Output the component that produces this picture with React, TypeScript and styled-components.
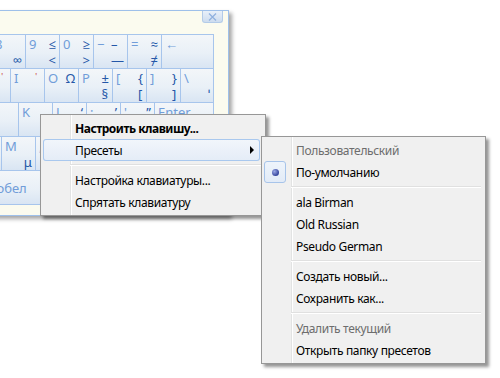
import React from "react";
import styled, { createGlobalStyle } from "styled-components";

type KeyDef = {
  id: string;
  w?: number;
  main?: string;
  top?: string;
  bottom?: string;
  mark?: boolean;
  wide?: boolean;
};

const ROWS: KeyDef[][] = [
  [
    { id: "7", main: "7", top: "&", bottom: "?" },
    { id: "8", main: "8", bottom: "∞" },
    { id: "9", main: "9", top: "≤", bottom: "<" },
    { id: "0", main: "0", top: "≥", bottom: ">" },
    { id: "minus", main: "−", top: "–", bottom: "—" },
    { id: "eq", main: "=", top: "≈", bottom: "≠" },
    { id: "bs", w: 51, main: "←" },
  ],
  [
    { id: "y", main: "Y" },
    { id: "u", main: "U", mark: true },
    { id: "i", main: "I", mark: true },
    { id: "o", main: "O", top: "Ω" },
    { id: "p", main: "P", top: "±", bottom: "§" },
    { id: "lb", main: "[", top: "{", bottom: "[" },
    { id: "rb", main: "]", top: "}", bottom: "]" },
    { id: "bsl", w: 32, main: "\\", bottom: "ˈ" },
  ],
  [
    { id: "h", main: "H" },
    { id: "j", main: "J" },
    { id: "k", main: "K" },
    { id: "l", main: "L", top: "‘" },
    { id: "semi", main: ";", top: "’" },
    { id: "quote", main: "'", top: "”" },
    { id: "enter", w: 58, main: "Enter" },
  ],
  [
    { id: "b", main: "B" },
    { id: "n", main: "N" },
    { id: "m", main: "M", bottom: "μ" },
    { id: "comma", main: "," },
    { id: "dot", main: "." },
    { id: "slash", main: "/" },
    { id: "rshift", w: 75, main: "Shift" },
  ],
  [
    { id: "alt", w: 40, main: "Alt" },
    { id: "space", w: 203, main: "Пробел", wide: true },
    { id: "ralt", w: 34, main: "Alt" },
  ],
];

type MenuEntry =
  | { kind: "sep"; id: string }
  | {
      kind: "item";
      id: string;
      label: string;
      bold?: boolean;
      disabled?: boolean;
      hot?: boolean;
      radio?: boolean;
      sub?: boolean;
    };

const MAIN_MENU: MenuEntry[] = [
  { kind: "item", id: "setup-key", label: "Настроить клавишу...", bold: true },
  { kind: "item", id: "presets", label: "Пресеты", hot: true, sub: true },
  { kind: "sep", id: "s1" },
  { kind: "item", id: "kb-setup", label: "Настройка клавиатуры..." },
  { kind: "item", id: "hide", label: "Спрятать клавиатуру" },
];

const PRESETS_MENU: MenuEntry[] = [
  { kind: "item", id: "custom", label: "Пользовательский", disabled: true },
  { kind: "item", id: "default", label: "По-умолчанию", radio: true },
  { kind: "sep", id: "s1" },
  { kind: "item", id: "birman", label: "ala Birman" },
  { kind: "item", id: "old-ru", label: "Old Russian" },
  { kind: "item", id: "pseudo-de", label: "Pseudo German" },
  { kind: "sep", id: "s2" },
  { kind: "item", id: "new", label: "Создать новый..." },
  { kind: "item", id: "save-as", label: "Сохранить как..." },
  { kind: "sep", id: "s3" },
  { kind: "item", id: "delete", label: "Удалить текущий", disabled: true },
  { kind: "item", id: "open-dir", label: "Открыть папку пресетов" },
];

const renderMenu = (entries: MenuEntry[]) =>
  entries.map((e) =>
    e.kind === "sep" ? (
      <Separator key={e.id} />
    ) : (
      <Item key={e.id} $bold={e.bold} $disabled={e.disabled} $hot={e.hot}>
        <IconCell $checked={e.radio}>{e.radio && <RadioDot />}</IconCell>
        {e.label}
        {e.sub && <SubArrow />}
      </Item>
    )
  );

const App: React.FC = () => {
  return (
    <Desktop>
      <GlobalStyle />
      <Window>
        <TitleBar>
          <CloseButton>
            <svg width="9" height="8" viewBox="0 0 9 8">
              <path d="M1 0.5 L8 7.5 M8 0.5 L1 7.5" stroke="#8fb0de" strokeWidth="1.2" />
            </svg>
          </CloseButton>
        </TitleBar>
        <Keyboard>
          {ROWS.map((row, i) => (
            <KeyRow key={i}>
              {row.map((k) => (
                <Key key={k.id} $w={k.w ?? 33} $wide={k.wide}>
                  <MainLabel>{k.main}</MainLabel>
                  {k.mark && <Mark>'</Mark>}
                  {k.top && <TopLabel>{k.top}</TopLabel>}
                  {k.bottom && <BottomLabel>{k.bottom}</BottomLabel>}
                </Key>
              ))}
            </KeyRow>
          ))}
        </Keyboard>
      </Window>

      <Menu $left={40} $top={114} $width={226}>
        {renderMenu(MAIN_MENU)}
      </Menu>
      <Menu $left={261} $top={136} $width={225}>
        {renderMenu(PRESETS_MENU)}
      </Menu>
    </Desktop>
  );
};

export default App;

const GlobalStyle = createGlobalStyle`
  html, body {
    margin: 0;
    padding: 0;
    background: #fff;
  }
  body {
    font-family: "Noto Sans", "Open Sans", sans-serif;
  }
`;

const Desktop = styled.div`
  position: relative;
  width: 500px;
  height: 378px;
  overflow: hidden;
  background: #fff;
`;

const Window = styled.div`
  position: absolute;
  left: -120px;
  top: 10px;
  width: 349px;
  box-sizing: border-box;
  padding: 0 14px 10px 8px;
  background: #fbfbef;
  border: 1px solid #9ec0ea;
  box-shadow: 3px 3px 4px rgba(0, 0, 0, 0.35);
`;

const TitleBar = styled.div`
  display: flex;
  justify-content: flex-end;
  align-items: flex-start;
  height: 23px;
  margin-right: -9px;
`;

const CloseButton = styled.div`
  width: 21px;
  height: 12px;
  box-sizing: border-box;
  display: flex;
  align-items: center;
  justify-content: center;
  border: 1px solid #b3cbe8;
  border-top: none;
  border-radius: 0 0 3px 3px;
  background: linear-gradient(#e8f0f9, #cddcef);
`;

const Keyboard = styled.div`
  display: flex;
  flex-direction: column;
  gap: 1px;
  padding: 1px;
  background: #a7c5ec;
  overflow: hidden;
`;

const KeyRow = styled.div`
  display: flex;
  justify-content: flex-end;
  gap: 1px;
`;

const Key = styled.div<{ $w: number; $wide?: boolean }>`
  position: relative;
  flex: 0 0 ${(p) => p.$w}px;
  height: 33px;
  box-sizing: border-box;
  padding: ${(p) => (p.$wide ? "9px 4px 0" : "1px 3px 0")};
  display: grid;
  grid-template-columns: 1fr auto;
  grid-template-rows: 16px 16px;
  background: linear-gradient(#f3f6f9 0%, #e9f0f7 55%, #d9e5f3 100%);
  font-size: 13px;
  line-height: 16px;
`;

const MainLabel = styled.span`
  grid-column: 1;
  grid-row: 1;
  color: #719dd9;
  white-space: nowrap;
`;

const TopLabel = styled.span`
  grid-column: 2;
  grid-row: 1;
  color: #2457a8;
`;

const BottomLabel = styled.span`
  grid-column: 2;
  grid-row: 2;
  color: #2457a8;
`;

const Mark = styled.span`
  position: absolute;
  right: 7px;
  top: 4px;
  color: #c81818;
  font-size: 8px;
  line-height: 8px;
`;

const Menu = styled.div<{ $left: number; $top: number; $width: number }>`
  position: absolute;
  left: ${(p) => p.$left}px;
  top: ${(p) => p.$top}px;
  width: ${(p) => p.$width}px;
  box-sizing: border-box;
  padding: 2px;
  border: 1px solid #979797;
  background: linear-gradient(
      to right,
      transparent 29px,
      #e2e3e3 29px,
      #e2e3e3 30px,
      #ffffff 30px,
      #ffffff 31px,
      transparent 31px
    ),
    #f0f0f0;
  box-shadow: 3px 3px 3px rgba(0, 0, 0, 0.42);
  font-size: 12px;
  letter-spacing: -0.35px;
  color: #000;
`;

const Item = styled.div<{ $bold?: boolean; $disabled?: boolean; $hot?: boolean }>`
  display: flex;
  align-items: center;
  height: 22px;
  margin-right: 3px;
  border-radius: 3px;
  font-weight: ${(p) => (p.$bold ? 700 : 400)};
  letter-spacing: ${(p) => (p.$bold ? "-0.5px" : "inherit")};
  color: ${(p) => (p.$disabled ? "#6d6d6d" : "#000")};
  white-space: nowrap;
  ${(p) =>
    p.$hot &&
    `
    background: linear-gradient(#f2f6fb, #e4ecf7);
    box-shadow: inset 0 0 0 1px #a9c8ee;
  `}
`;

const IconCell = styled.div<{ $checked?: boolean }>`
  flex: 0 0 22px;
  height: 22px;
  box-sizing: border-box;
  margin-right: 10px;
  display: flex;
  align-items: center;
  justify-content: center;
  border-radius: 3px;
  ${(p) =>
    p.$checked &&
    `
    border: 1px solid #a7c4ea;
    background: linear-gradient(#eef4fb, #e2ebf7);
  `}
`;

const RadioDot = styled.div`
  width: 7px;
  height: 7px;
  border-radius: 50%;
  background: radial-gradient(circle at 35% 35%, #9aa8e6, #34449c 70%);
`;

const SubArrow = styled.div`
  margin-left: auto;
  margin-right: 6px;
  width: 0;
  height: 0;
  border-left: 4px solid #000;
  border-top: 4px solid transparent;
  border-bottom: 4px solid transparent;
`;

const Separator = styled.div`
  margin: 3px 2px 3px 27px;
  border-top: 1px solid #e0e0e0;
  border-bottom: 1px solid #ffffff;
`;
